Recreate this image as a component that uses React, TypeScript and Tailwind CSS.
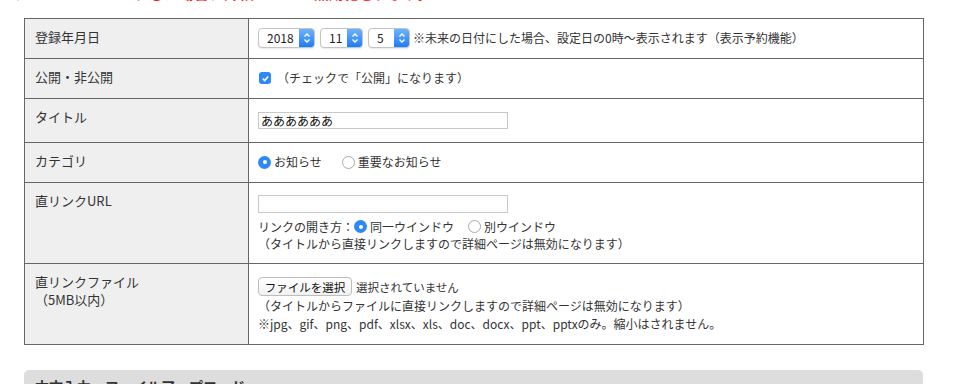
import React from "react";

const font = { fontFamily: '"Noto Sans CJK JP", "Noto Sans", sans-serif' };

function Stepper({ value, width }: { value: string; width: string }) {
	return (
		<div
			className={`flex h-[20px] ${width} items-stretch rounded-[4px] border border-[#c4c4c4] bg-white shadow-[0_1px_1px_rgba(0,0,0,0.08)]`}
		>
			<span className="flex-1 pl-[8px] text-[12px] leading-[18px] text-[#222]">{value}</span>
			<span className="flex w-[15px] items-center justify-center rounded-r-[3px] bg-gradient-to-b from-[#6cb3fa] to-[#1a7cf4]">
				<svg width="8" height="12" viewBox="0 0 8 12">
					<path d="M1.5 4.5 L4 2 L6.5 4.5" fill="none" stroke="#fff" strokeWidth="1.4" />
					<path d="M1.5 7.5 L4 10 L6.5 7.5" fill="none" stroke="#fff" strokeWidth="1.4" />
				</svg>
			</span>
		</div>
	);
}

function Radio({ checked, className = "" }: { checked?: boolean; className?: string }) {
	return checked ? (
		<span
			className={`flex h-[13px] w-[13px] shrink-0 items-center justify-center rounded-full bg-[#2f88f7] ${className}`}
		>
			<span className="h-[4px] w-[4px] rounded-full bg-white" />
		</span>
	) : (
		<span
			className={`block h-[13px] w-[13px] shrink-0 rounded-full border border-[#a9a9a9] bg-white ${className}`}
		/>
	);
}

type Row = {
	label: React.ReactNode;
	height: string;
	pad: string;
	body: React.ReactNode;
};

export default function App() {
	const rows: Row[] = [
		{
			label: "登録年月日",
			height: "h-[40px]",
			pad: "pt-[9px]",
			body: (
				<div className="flex items-center gap-[5px]">
					<Stepper value="2018" width="w-[57px]" />
					<Stepper value="11" width="w-[43px]" />
					<Stepper value="5" width="w-[42px]" />
					<span className="-ml-[2px]">※未来の日付にした場合、設定日の0時〜表示されます（表示予約機能）</span>
				</div>
			),
		},
		{
			label: "公開・非公開",
			height: "h-[40px]",
			pad: "pt-[10px]",
			body: (
				<div className="flex items-center gap-[6px] leading-[18px]">
					<span className="ml-[1px] flex h-[12px] w-[12px] items-center justify-center rounded-[3px] bg-[#2f88f7]">
						<svg width="9" height="9" viewBox="0 0 9 9">
							<path d="M1.8 4.6 L3.7 6.5 L7.2 2.4" fill="none" stroke="#fff" strokeWidth="1.6" />
						</svg>
					</span>
					<span>（チェックで「公開」になります）</span>
				</div>
			),
		},
		{
			label: "タイトル",
			height: "h-[44px]",
			pad: "pt-[13px]",
			body: (
				<div className="flex h-[17px] w-[250px] items-center border border-[#c8c8c8] bg-white pl-[2px] text-[12px] text-[#111]">
					ああああああ
				</div>
			),
		},
		{
			label: "カテゴリ",
			height: "h-[40px]",
			pad: "pt-[10px]",
			body: (
				<div className="flex items-center leading-[18px]">
					<Radio checked />
					<span className="ml-[3px]">お知らせ</span>
					<Radio className="ml-[20px]" />
					<span className="ml-[3px]">重要なお知らせ</span>
				</div>
			),
		},
		{
			label: "直リンクURL",
			height: "h-[81px]",
			pad: "pt-[12px]",
			body: (
				<div className="flex flex-col leading-[17px]">
					<div className="h-[18px] w-[250px] border border-[#c8c8c8] bg-white" />
					<div className="mt-[5px] flex items-center">
						<span>リンクの開き方：</span>
						<Radio checked />
						<span className="ml-[3px]">同一ウインドウ</span>
						<Radio className="ml-[14px]" />
						<span className="ml-[3px]">別ウインドウ</span>
					</div>
					<div>（タイトルから直接リンクしますので詳細ページは無効になります）</div>
				</div>
			),
		},
		{
			label: (
				<>
					直リンクファイル
					<br />
					（5MB以内）
				</>
			),
			height: "h-[80px]",
			pad: "pt-[13px]",
			body: (
				<div className="flex flex-col leading-[18px]">
					<div className="flex items-center">
						<span className="flex h-[19px] w-[94px] items-center justify-center rounded-[4px] border border-[#bdbdbd] bg-gradient-to-b from-white to-[#f1f1f1] text-[11.5px] text-[#111]">
							ファイルを選択
						</span>
						<span className="ml-[4px] text-[11.5px]">選択されていません</span>
					</div>
					<div className="mt-[1px]">（タイトルからファイルに直接リンクしますので詳細ページは無効になります）</div>
					<div>※jpg、gif、png、pdf、xlsx、xls、doc、docx、ppt、pptxのみ。縮小はされません。</div>
				</div>
			),
		},
	];

	return (
		<div className="h-[384px] w-[972px] overflow-hidden bg-white text-[#333]" style={font}>
			<p className="-mt-[17px] mb-[15px] ml-[14px] text-[15px] font-bold leading-[20px] text-[#ff1a1a]">
				タイトルからリンクした場合、詳細ページは無効化されます。
			</p>

			<div className="ml-[24px] w-[900px] border border-[#666]">
				{rows.map((row, i) => (
					<div
						key={i}
						className={`flex ${row.height} ${i < rows.length - 1 ? "border-b border-[#666]" : ""}`}
					>
						<div className="w-[224px] shrink-0 border-r border-[#666] bg-[#efefef] px-[10px] pt-[9px] text-[13px] leading-[18px] text-[#333]">
							{row.label}
						</div>
						<div className={`flex-1 pl-[9px] text-[12px] text-[#333] ${row.pad}`}>{row.body}</div>
					</div>
				))}
			</div>

			<div className="ml-[24px] mt-[25px] h-[40px] w-[899px] rounded-t-[5px] bg-[#dddddd] px-[11px] pt-[6px] text-[14px] font-bold leading-[20px] text-[#333]">
				本文入力・ファイルアップロード
			</div>
		</div>
	);
}
